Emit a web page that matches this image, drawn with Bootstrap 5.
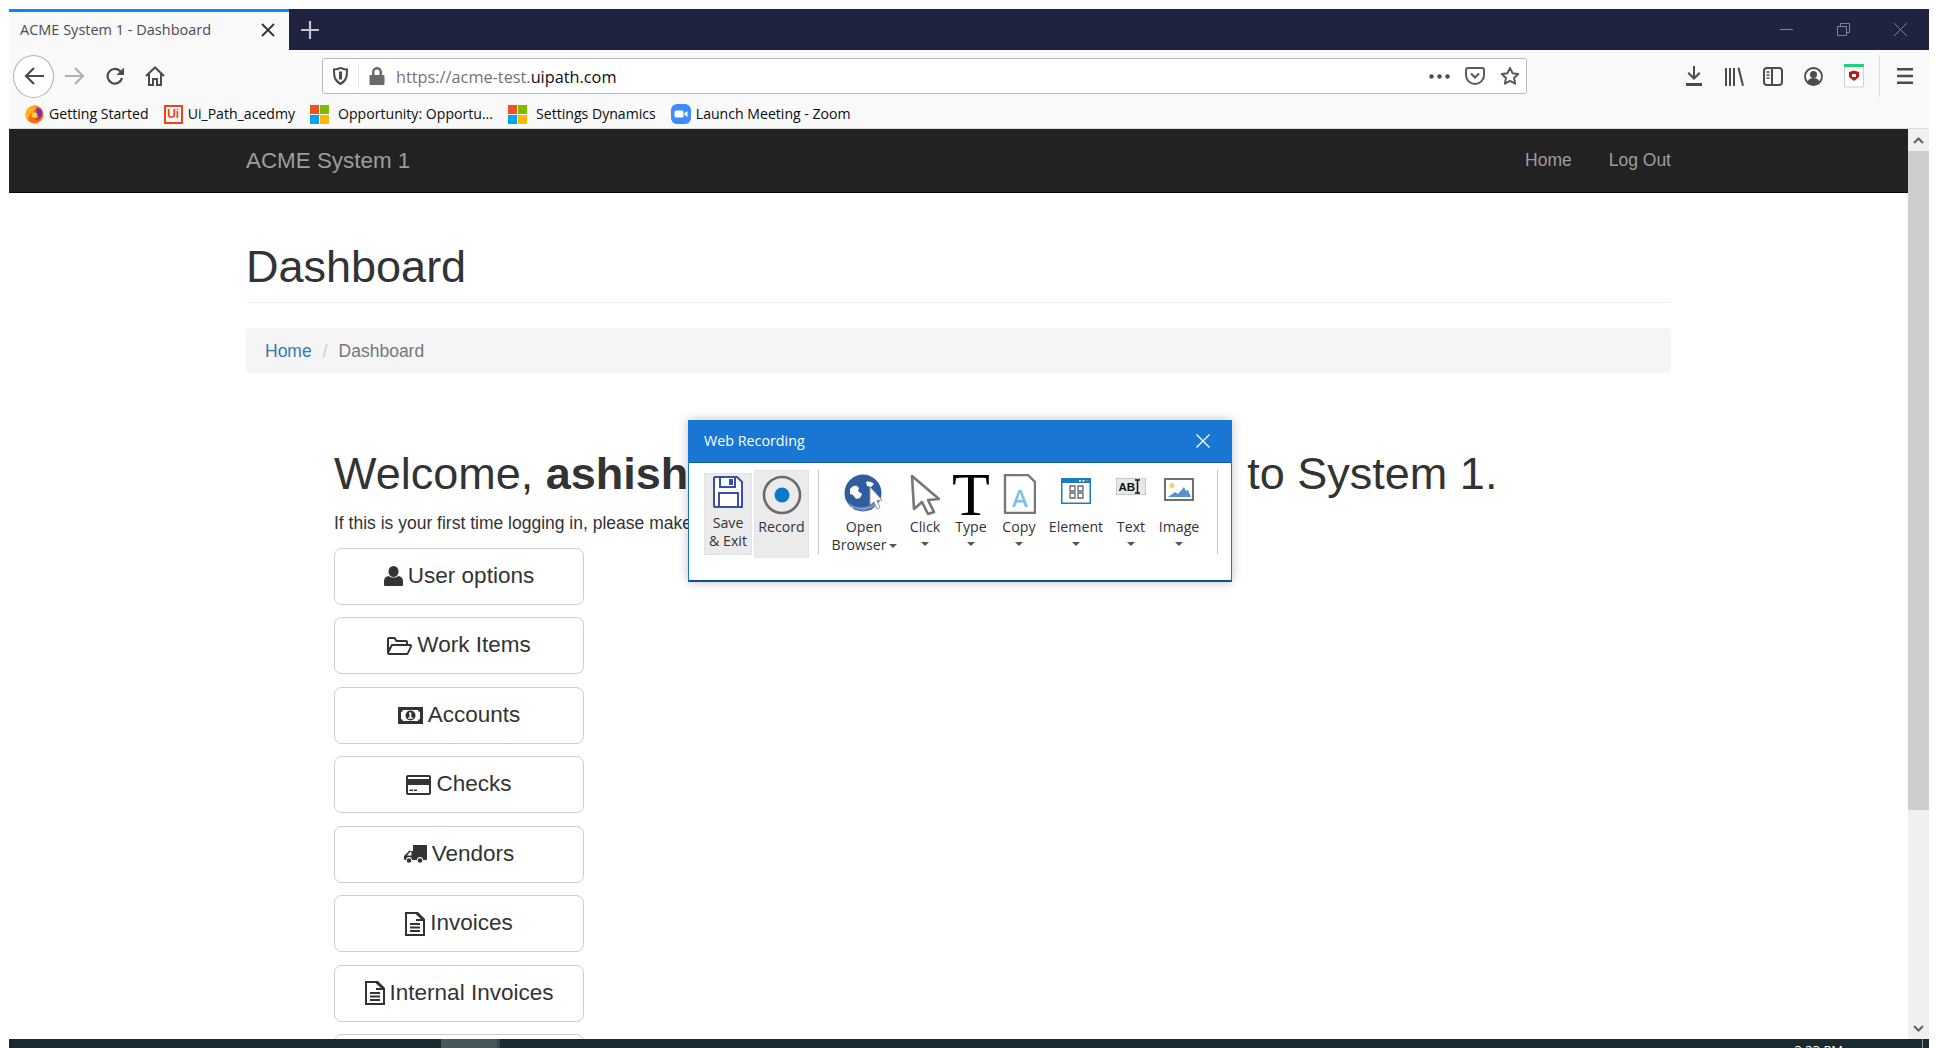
<!DOCTYPE html>
<html lang="en">
<head>
  <meta charset="UTF-8">
  <title>ACME System 1 - Dashboard</title>
  <meta name="viewport" content="width=device-width, initial-scale=1">
  <link href="https://cdn.jsdelivr.net/npm/bootstrap@5.3.3/dist/css/bootstrap.min.css" rel="stylesheet">
  <style>
    html, body { height: 100%; }
    body { margin: 0; background: #fff; overflow: hidden; font-family: "Liberation Sans", Arial, sans-serif; color: #333; }
    .shot { position: relative; height: 1048px; padding: 9px 9px 0; display: flex; flex-direction: column; }

    /* firefox chrome */
    .ff-ui { font-family: "Open Sans", "Noto Sans", sans-serif; }
    .title-strip { height: 41px; background: #202340; flex: none; }
    .ff-tab { width: 280px; background: #f9f9fa; border-top: 3px solid #0a84ff; color: #4a4a4f; font-size: 14.5px; padding: 0 14px 3px 11px; }
    .tab-plus { margin-left: 12px; }
    .win-btns { gap: 44px; padding-right: 22px; }
    .tool-strip { height: 52px; background: #f9f9fa; flex: none; padding-left: 4px; }
    .back-circle { width: 41px; height: 43px; border: 1px solid #b1b1b3; border-radius: 50%; background: #fff; }
    .ico-forward { margin-left: 11px; }
    .ico-reload { margin-left: 21px; }
    .ico-home { margin-left: 20px; }
    .url-box { flex: 0 0 1205px; height: 36px; margin-left: 157px; background: #fff; border: 1px solid #b9b9bb; border-radius: 3px; padding: 0 6px 0 10px; font-size: 16.3px; color: #737373; }
    .url-sep { width: 1px; height: 26px; background: #e6e6e6; margin: 0 10px; }
    .url-host { color: #0c0c0d; }
    .url-text { margin-left: 11px; padding-top: 2px; }
    .url-right { gap: 15px; }
    .tool-right { margin-left: 159px; gap: 21px; }
    .lib-ico { margin: 0 -2px 0 2px; }
    .tool-sep { width: 1px; height: 42px; background: #dcdcdc; margin-left: -6px; margin-right: -4px; }
    .mark-strip { height: 27px; background: #f9f9fa; border-bottom: 1px solid #dcdcdc; flex: none; padding-left: 16px; font-size: 14.1px; color: #0c0c0d; line-height: 1; padding-bottom: 2px; }
    .mark-item { gap: 5px; margin-right: 15px; white-space: nowrap; }
    .mark-ui { width: 19px; height: 19px; border: 2px solid #f0421c; color: #f0421c; font-size: 12px; font-weight: 700; line-height: 15px; text-align: center; font-family: "Liberation Sans", sans-serif; }

    /* page */
    .page-row { flex: 1 1 auto; min-height: 0; }
    .page-view { flex: 1 1 auto; min-width: 0; overflow: hidden; }
    .acme-nav { height: 64px; background: #222; border-bottom: 1px solid #080808; padding: 0; font-size: 17.5px; }
    .acme-inner { width: 1425px; margin: 0 auto; }
    .acme-nav .navbar-brand { color: #9d9d9d; font-size: 22.4px; padding: 0; margin: 0; }
    .acme-nav .nav-link { color: #9d9d9d; padding: 0; margin-left: 37px; }
    .page-head { margin-top: 49px; padding-bottom: 10px; border-bottom: 1px solid #eee; }
    .page-head h1 { font-size: 45px; line-height: 49.5px; font-weight: 500; margin: 0; color: #333; }
    .acme-crumbs { margin: 25px 0 0; height: 45px; padding: 11px 19px 9px; background: #f5f5f5; border-radius: 5px; font-size: 17.5px; line-height: 25px; --bs-breadcrumb-divider-color: #ccc; }
    .acme-crumbs a { color: #337ab7; text-decoration: none; }
    .acme-crumbs .breadcrumb-item.active { color: #777; }
    .acme-crumbs .breadcrumb-item + .breadcrumb-item { padding-left: 11px; }
    .acme-crumbs .breadcrumb-item + .breadcrumb-item::before { padding-right: 11px; color: #ccc; }
    .welcome-box { padding-left: 88px; }
    .welcome-box h2 { font-size: 45px; line-height: 49.5px; font-weight: 500; margin: 76px 0 0; color: #333; white-space: nowrap; }
    .welcome-gap { display: inline-block; width: 559px; }
    .welcome-box p { font-size: 17.5px; line-height: 25px; margin: 13px 0 11.5px; color: #333; }
    .menu-stack { width: 250px; gap: 12.5px; }
    .menu-btn { height: 57px; font-size: 22.5px; line-height: 1; color: #333; background: #fff; border: 1px solid #ccc; border-radius: 7.5px; gap: 5px; padding: 0; flex: none; }
    .menu-btn svg { fill: #333; flex: none; }

    /* scrollbar */
    .fake-scroll { flex: 0 0 21px; background: #f0f0f0; }
    .scroll-arrow { height: 22px; }
    .scroll-thumb { height: 659px; background: #cdcdcd; }

    /* taskbar */
    .task-strip { height: 9px; background: #1a2a30; flex: none; overflow: hidden; color: #fff; font-size: 12px; }
    .task-on { width: 56px; margin-left: 432px; background: #47575a; }
    .task-edge { width: 3px; background: #38474b; }
    .task-time { margin-left: auto; padding-top: 4px; line-height: 14px; font-family: "Open Sans", sans-serif; font-size: 13px; }
    .task-line { width: 1px; background: #8a9598; margin-left: 79px; margin-right: 6px; }

    /* recorder window */
    .rec-win { position: absolute; left: 688px; top: 420px; width: 544px; height: 162px; background: #fff; border: 1px solid #1976d2; border-bottom: 2px solid #0f4f94; box-shadow: 0 0 10px rgba(0,0,0,.25); }
    .rec-head { height: 42px; background: #1976d2; border-bottom: 1px solid #0f5cab; color: #fff; font-size: 14.3px; padding: 0 21px 2px 15px; }
    .rec-tools { display: grid; grid-template-columns: 48px 55px 22px 70px 52px 40px 56px 58px 52px 44px 33px; padding: 7px 0 0 15px; font-size: 14.2px; line-height: 18px; color: #333; text-align: center; }
    .rec-tool { height: 84px; position: relative; }
    .rec-ic { height: 44px; display: flex; align-items: flex-start; justify-content: center; padding-top: 4px; }
    .rec-ic-low { padding-top: 8px; }
    .rec-save { background: #ebebeb; border: 1px solid #e3e3e3; height: 82px; margin-top: 3px; }
    .rec-save .rec-ic { height: 40px; padding-top: 2px; }
    .rec-rec { background: #ebebeb; border: 1px solid #e3e3e3; height: 88px; margin-left: 2px; margin-right: -2px; }
    .rec-rec-lbl { margin-top: 3px; }
    .rec-type { font-family: "Liberation Serif", serif; font-size: 62px; line-height: 40px; color: #000; }
    .rec-div { display: flex; justify-content: center; }
    .rec-div i { width: 1px; height: 84px; background: #c8c8c8; display: block; }
    .rec-caret { width: 0; height: 0; margin: 6px auto 0; border: 4px solid transparent; border-top: 4px solid #555; border-bottom: 0; }
    .rec-caret-in { display: inline-block; margin: 0 0 2px 2px; }
  </style>
</head>
<body>

<svg width="0" height="0" class="position-absolute">
  <symbol id="gl-doc" viewBox="0 0 20 24"><path d="M2 0h11l7 7v17H0V0zm0 2v20h16V9h-7V2zm9 .5V7h5z" fill-rule="evenodd"/><path d="M5 11h10v2H5zm0 3.500h10v2H5zm0 3.500h10v2H5z"/></symbol>
  <symbol id="ms-flag" viewBox="0 0 19 19"><path fill="#f25022" d="M0 0h9v9H0z"/><path fill="#7fba00" d="M10 0h9v9h-9z"/><path fill="#00a4ef" d="M0 10h9v9H0z"/><path fill="#ffb900" d="M10 10h9v9h-9z"/></symbol>
</svg>

<div class="shot">

  <div class="title-strip ff-ui d-flex">
    <div class="ff-tab d-flex align-items-center justify-content-between">
      <span>ACME System 1 - Dashboard</span>
      <svg width="14" height="14" viewBox="0 0 14 14"><path d="M1 1l12 12M13 1L1 13" stroke="#333" stroke-width="1.800"/></svg>
    </div>
    <svg class="tab-plus align-self-center" width="18" height="18" viewBox="0 0 18 18"><path d="M9 0v18M0 9h18" stroke="#c4c5d0" stroke-width="2.200"/></svg>
    <div class="win-btns ms-auto d-flex align-items-center">
      <svg width="13" height="13" viewBox="0 0 13 13"><path d="M0 6.500h13" stroke="#80829a"/></svg>
      <svg width="13" height="13" viewBox="0 0 13 13" fill="none" stroke="#80829a"><path d="M.5 3.500h9v9h-9zM3.500 3.500v-3h9v9h-3"/></svg>
      <svg width="13" height="13" viewBox="0 0 13 13"><path d="M0 0l13 13M13 0L0 13" stroke="#80829a"/></svg>
    </div>
  </div>

  <div class="tool-strip ff-ui d-flex align-items-center">
    <div class="back-circle d-flex align-items-center justify-content-center flex-none">
      <svg width="20" height="18" viewBox="0 0 20 18" fill="none" stroke="#4a4a4f" stroke-width="2.200"><path d="M20 9H2M10 1L2 9l8 8"/></svg>
    </div>
    <svg class="ico-forward" width="20" height="18" viewBox="0 0 20 18" fill="none" stroke="#b1b1b3" stroke-width="2.200"><path d="M0 9h18M10 1l8 8-8 8"/></svg>
    <svg class="ico-reload" width="19" height="19" viewBox="0 0 19 19" fill="none" stroke="#4a4a4f" stroke-width="2.200"><path d="M16 11a7.300 7.300 0 1 1-2-7l3 3"/><path d="M18 .5V8h-7.500" stroke="none" fill="#4a4a4f"/></svg>
    <svg class="ico-home" width="20" height="20" viewBox="0 0 20 20" fill="none" stroke="#4a4a4f" stroke-width="2"><path d="M1 10l9-8.500L19 10M4 8v11h4v-6h4v6h4V8"/></svg>

    <div class="url-box d-flex align-items-center">
      <svg width="15" height="18" viewBox="0 0 15 18" fill="none" stroke="#4a4a4f" stroke-width="2"><path d="M1 2.500C5 2.500 6 1 7.500 1S10 2.500 14 2.500c0 6 0 11-6.500 14.500C1 13.500 1 8.500 1 2.500z"/><path d="M7.500 4.500v8" stroke-width="3"/></svg>
      <span class="url-sep"></span>
      <svg width="16" height="18" viewBox="0 0 16 18" fill="#6a6a6d"><path d="M3 8V5a5 5 0 0 1 10 0v3h1.500a1 1 0 0 1 1 1v8a1 1 0 0 1-1 1h-13a1 1 0 0 1-1-1V9a1 1 0 0 1 1-1zm2.500 0h5V5a2.500 2.500 0 0 0-5 0z"/></svg>
      <span class="url-text">https://acme-test.<span class="url-host">uipath.com</span></span>
      <div class="url-right ms-auto d-flex align-items-center">
        <svg width="21" height="5" viewBox="0 0 21 5" fill="#4a4a4f"><circle cx="2.500" cy="2.500" r="2.200"/><circle cx="10.500" cy="2.500" r="2.200"/><circle cx="18.500" cy="2.500" r="2.200"/></svg>
        <svg width="20" height="18" viewBox="0 0 20 18" fill="none" stroke="#5a5a5f" stroke-width="2"><path d="M1 3a2 2 0 0 1 2-2h14a2 2 0 0 1 2 2v5a9 9 0 0 1-18 0z"/><path d="M6 6.500l4 4 4-4" stroke-width="2.200"/></svg>
        <svg width="20" height="20" viewBox="0 0 20 20" fill="none" stroke="#5a5a5f" stroke-width="2" stroke-linejoin="round"><path d="M10 1.800l2.500 5.400 5.800.7-4.300 4 1.200 5.800L10 14.800l-5.200 2.900L6 11.900l-4.300-4 5.800-.7z"/></svg>
      </div>
    </div>

    <div class="tool-right d-flex align-items-center">
      <svg width="16" height="20" viewBox="0 0 16 20" fill="#4a4a4f"><path d="M7 0h2v10l4-4 1.500 1.500L8 14 1.500 7.500 3 6l4 4zM0 17h16v3H0z"/></svg>
      <svg class="lib-ico" width="19" height="19" viewBox="0 0 19 19" fill="#4a4a4f"><path d="M0 1h2v18H0zm4 0h2v18H4zm4 0h2v18H8zM12.500 1l2-.6 4.500 18-2 .6z"/></svg>
      <svg width="20" height="19" viewBox="0 0 20 19" fill="none" stroke="#4a4a4f" stroke-width="2"><rect x="1" y="1" width="18" height="17" rx="3"/><path d="M9 1v17"/><path d="M3.500 5h3M3.500 8h3M3.500 11h3" stroke-width="1.500"/></svg>
      <svg width="19" height="19" viewBox="0 0 19 19"><circle cx="9.500" cy="9.500" r="8.500" fill="none" stroke="#4a4a4f" stroke-width="1.800"/><circle cx="9.500" cy="7.500" r="3.500" fill="#4a4a4f"/><path d="M3.500 15c1-3 3-4 6-4s5 1 6 4c-3 3-9 3-12 0z" fill="#4a4a4f"/></svg>
      <svg width="20" height="24" viewBox="0 0 20 24"><path fill="#fff" stroke="#d0d0d0" d="M.5 1h19v22H.5z"/><path fill="#1fd37a" d="M0 0h20v3H0z"/><path fill="#c01818" d="M5 8l5-1.500L15 8v5l-5 4-5-4z"/><path fill="#fff" d="M8 10h4v3H8z"/></svg>
      <span class="tool-sep"></span>
      <svg width="16" height="16" viewBox="0 0 16 16" fill="#4a4a4f"><path d="M0 0h16v2.500H0zm0 6.700h16v2.500H0zm0 6.800h16V16H0z"/></svg>
    </div>
  </div>

  <div class="mark-strip ff-ui d-flex align-items-center">
    <div class="mark-item d-flex align-items-center">
      <svg width="19" height="20" viewBox="0 0 19 20"><circle cx="9.500" cy="10.500" r="9" fill="#ff6a1a"/><path d="M3 4C1 6 .5 9 .5 10.500c0 3 1.500 5.500 3.500 7C2.500 13 5 9 9 8.500 8 7 9 5 12 3.500 10 2 6 1.500 3 4z" fill="#ffb21a"/><path d="M9.500 1.500c3 0 6 2 7.500 5-2-2-4-2.500-6-2.500 1 1.500 1 3.500-.5 4.500-2.500 0-4 1.500-3 3.500 2 1.500 6 .5 6.500-1.500.5 3-2 5-5 5 2 1 4 .5 6-1 2-2 2.500-4 2-7-1-3.500-4.500-6-7.500-6z" fill="#7d2fb5"/><circle cx="9.500" cy="11" r="2.800" fill="#ffd23f"/></svg>
      <span>Getting Started</span>
    </div>
    <div class="mark-item d-flex align-items-center">
      <span class="mark-ui">Ui</span>
      <span>Ui_Path_acedmy</span>
    </div>
    <div class="mark-item d-flex align-items-center">
      <svg width="19" height="19"><use href="#ms-flag"/></svg>
      <span class="ms-1">Opportunity: Opportu...</span>
    </div>
    <div class="mark-item d-flex align-items-center">
      <svg width="19" height="19"><use href="#ms-flag"/></svg>
      <span class="ms-1">Settings Dynamics</span>
    </div>
    <div class="mark-item d-flex align-items-center">
      <svg width="20" height="20" viewBox="0 0 20 20"><rect width="20" height="20" rx="6" fill="#3d8bfd"/><rect x="3.500" y="6.500" width="9" height="7" rx="1.500" fill="#fff"/><path d="M13.500 9l3-2v6l-3-2z" fill="#fff"/></svg>
      <span>Launch Meeting - Zoom</span>
    </div>
  </div>

  <div class="page-row d-flex">
    <div class="page-view">
      <nav class="navbar acme-nav">
        <div class="acme-inner d-flex align-items-center justify-content-between">
          <a class="navbar-brand" href="#">ACME System 1</a>
          <div class="d-flex">
            <a class="nav-link" href="#">Home</a>
            <a class="nav-link" href="#">Log Out</a>
          </div>
        </div>
      </nav>

      <div class="acme-inner">
        <div class="page-head"><h1>Dashboard</h1></div>
        <ol class="breadcrumb acme-crumbs">
          <li class="breadcrumb-item"><a href="#">Home</a></li>
          <li class="breadcrumb-item active">Dashboard</li>
        </ol>

        <div class="welcome-box">
          <h2>Welcome, <b>ashish</b><span class="welcome-gap"></span>to System 1.</h2>
          <p>If this is your first time logging in, please make</p>
          <div class="menu-stack d-flex flex-column">
            <a class="menu-btn btn d-flex align-items-center justify-content-center" href="#">
              <svg width="19" height="20" viewBox="0 0 19 20"><ellipse cx="9.500" cy="5.500" rx="5" ry="5.500"/><path d="M0 19v-4c0-3 2-4.500 5-5 1 2 8 2 9 0 3 .5 5 2 5 5v4a1 1 0 0 1-1 1H1a1 1 0 0 1-1-1z"/></svg>
              <span>User options</span>
            </a>
            <a class="menu-btn btn d-flex align-items-center justify-content-center" href="#">
              <svg width="25" height="19" viewBox="0 0 25 19"><path fill-rule="evenodd" d="M2 1h6l2 3h9a2 2 0 0 1 2 2v2h2a2 2 0 0 1 1.800 3l-3.300 7a2 2 0 0 1-1.500 1H2a2 2 0 0 1-2-2V3a2 2 0 0 1 2-2zm0 2v9l2.500-4H19V6H9L7 3zm3.500 7L2 17h18l3.200-7z"/></svg>
              <span>Work Items</span>
            </a>
            <a class="menu-btn btn d-flex align-items-center justify-content-center" href="#">
              <svg width="25" height="17" viewBox="0 0 25 17"><path fill-rule="evenodd" d="M0 0h25v17H0zm5 3c0 1-1 2-2 2v7c1 0 2 1 2 2h15c0-1 1-2 2-2V5c-1 0-2-1-2-2z"/><circle cx="12.500" cy="8.500" r="5"/><path fill="#fff" d="M11 5.500h2.300v5H15v1.200h-5v-1.200h1.500V7H11z"/></svg>
              <span>Accounts</span>
            </a>
            <a class="menu-btn btn d-flex align-items-center justify-content-center" href="#">
              <svg width="25" height="20" viewBox="0 0 25 20"><path fill-rule="evenodd" d="M2 0h21a2 2 0 0 1 2 2v16a2 2 0 0 1-2 2H2a2 2 0 0 1-2-2V2a2 2 0 0 1 2-2zm0 2v2h21V2zm0 8v8h21v-8z"/><path d="M3.500 14.500H7V16H3.500zm4.500 0h3V16H8z"/></svg>
              <span>Checks</span>
            </a>
            <a class="menu-btn btn d-flex align-items-center justify-content-center" href="#">
              <svg width="23" height="19" viewBox="0 0 23 19"><path d="M9 0h13a1 1 0 0 1 1 1v13a1 1 0 0 1-1 1h-3a3 3 0 0 0-6 0H8a3 3 0 0 0-6 0H1a1 1 0 0 1-1-1v-3l5-5h4zM3 10.500h4.500V7H6z"/><circle cx="5" cy="15.500" r="2.300"/><circle cx="16" cy="15.500" r="2.300"/></svg>
              <span>Vendors</span>
            </a>
            <a class="menu-btn btn d-flex align-items-center justify-content-center" href="#">
              <svg width="20" height="24"><use href="#gl-doc"/></svg>
              <span>Invoices</span>
            </a>
            <a class="menu-btn btn d-flex align-items-center justify-content-center" href="#">
              <svg width="20" height="24"><use href="#gl-doc"/></svg>
              <span>Internal Invoices</span>
            </a>
            <a class="menu-btn btn d-flex align-items-center justify-content-center" href="#"></a>
          </div>
        </div>
      </div>
    </div>

    <div class="fake-scroll d-flex flex-column">
      <div class="scroll-arrow d-flex align-items-center justify-content-center">
        <svg width="11" height="7" viewBox="0 0 11 7" fill="none" stroke="#606060" stroke-width="2"><path d="M1 6l4.500-4.500L10 6"/></svg>
      </div>
      <div class="scroll-thumb"></div>
      <div class="scroll-arrow mt-auto d-flex align-items-center justify-content-center">
        <svg width="11" height="7" viewBox="0 0 11 7" fill="none" stroke="#606060" stroke-width="2"><path d="M1 1l4.500 4.500L10 1"/></svg>
      </div>
    </div>
  </div>

  <div class="task-strip d-flex">
    <div class="task-on"></div>
    <div class="task-edge"></div>
    <div class="task-time">3:33 PM</div>
    <div class="task-line"></div>
  </div>

  <div class="rec-win ff-ui">
    <div class="rec-head d-flex align-items-center justify-content-between">
      <span>Web Recording</span>
      <svg width="14" height="14" viewBox="0 0 14 14"><path d="M.5.5l13 13M13.500.5l-13 13" stroke="#fff" stroke-width="1.300"/></svg>
    </div>
    <div class="rec-tools">
      <div class="rec-tool rec-save">
        <div class="rec-ic">
          <svg width="30" height="32" viewBox="0 0 30 32" fill="none" stroke="#3c4fa3" stroke-width="2"><path d="M2 1h22l5 5v25H2a1 1 0 0 1-1-1V2a1 1 0 0 1 1-1z" fill="#fff"/><path d="M7 1v10h15V1"/><path d="M16 3h4v6h-4z" fill="#3c4fa3" stroke="none"/><path d="M6 31V17h19v14"/></svg>
        </div>
        <div>Save<br>&amp; Exit</div>
      </div>
      <div class="rec-tool rec-rec">
        <div class="rec-ic">
          <svg width="40" height="40" viewBox="0 0 40 40"><circle cx="20" cy="20" r="18" fill="none" stroke="#6b6b6b" stroke-width="2.600"/><circle cx="20" cy="20" r="7.500" fill="#0b78c9"/></svg>
        </div>
        <div class="rec-rec-lbl">Record</div>
      </div>
      <div class="rec-div"><i></i></div>
      <div class="rec-tool">
        <div class="rec-ic">
          <svg width="40" height="40" viewBox="0 0 40 40"><circle cx="19" cy="19" r="18.500" fill="#2f5d9f"/><path d="M6 15c2-3 5-4 7-3l2 2-1 3 4 3-2 4-4 1-3-4-3-1zM22 8c3-1 6 0 8 2l-3 3-4-1z" fill="#fff"/><path d="M3 27c6 7 18 9 28 2l2 3-13 5-12-3z" fill="#fff" opacity=".35"/><path d="M26 13l12 13-5 .5 3 7-3 1.500-3-7-4 3z" fill="#fff" stroke="#999" stroke-width="1"/></svg>
        </div>
        <div class="mt-1">Open<br>Browser<span class="rec-caret rec-caret-in"></span></div>
      </div>
      <div class="rec-tool">
        <div class="rec-ic">
          <svg width="30" height="42" viewBox="0 0 30 42" fill="none" stroke="#767676" stroke-width="2.600" stroke-linejoin="round"><path d="M2 2l27 23-11 1 6 12-6 2-6-12-8 7z"/></svg>
        </div>
        <div class="mt-1">Click</div>
        <div class="rec-caret"></div>
      </div>
      <div class="rec-tool">
        <div class="rec-ic rec-type">T</div>
        <div class="mt-1">Type</div>
        <div class="rec-caret"></div>
      </div>
      <div class="rec-tool">
        <div class="rec-ic">
          <svg width="33" height="40" viewBox="0 0 33 40"><path d="M2 1h23l7 7v31H2z" fill="#fff" stroke="#777" stroke-width="2.400"/><text x="17" y="33" text-anchor="middle" font-family="Open Sans, sans-serif" font-size="24" font-weight="600" fill="#7fc1ea">A</text></svg>
        </div>
        <div class="mt-1">Copy</div>
        <div class="rec-caret"></div>
      </div>
      <div class="rec-tool">
        <div class="rec-ic rec-ic-low">
          <svg width="30" height="26" viewBox="0 0 30 26"><rect width="30" height="26" fill="#1a7dbf"/><rect x="1.500" y="5" width="27" height="19.500" fill="#fff"/><path d="M18 2h2v1.500h-2zm3.500 0h2v1.500h-2z" fill="#fff"/><path d="M25 2h2v1.500h-2z" fill="#f0616d"/><path d="M9 8h5v5H9zm8 0h5v5h-5zM9 15h5v5H9zm8 0h5v5h-5z" fill="none" stroke="#666" stroke-width="1.300"/></svg>
        </div>
        <div class="mt-1">Element</div>
        <div class="rec-caret"></div>
      </div>
      <div class="rec-tool">
        <div class="rec-ic rec-ic-low">
          <svg width="30" height="17" viewBox="0 0 30 17"><rect width="30" height="17" fill="#e8e8e8" stroke="#aaa"/><text x="2.500" y="13" font-family="Liberation Sans, sans-serif" font-size="11.500" font-weight="700" fill="#111">AB</text><path d="M19 2h5M19 15h5M21.500 2v13" stroke="#111" stroke-width="1.500" fill="none"/></svg>
        </div>
        <div class="mt-1">Text</div>
        <div class="rec-caret"></div>
      </div>
      <div class="rec-tool">
        <div class="rec-ic rec-ic-low">
          <svg width="30" height="23" viewBox="0 0 30 23"><rect x="1" y="1" width="28" height="21" fill="#fff" stroke="#707070" stroke-width="2"/><circle cx="8" cy="7.500" r="2.500" fill="#f2cf5b"/><path d="M4 19l7-5 3 2 6-7 2 4 2-1 3 7z" fill="#5c8fd0"/></svg>
        </div>
        <div class="mt-1">Image</div>
        <div class="rec-caret"></div>
      </div>
      <div class="rec-div"><i></i></div>
    </div>
  </div>

</div>

</body>
</html>
